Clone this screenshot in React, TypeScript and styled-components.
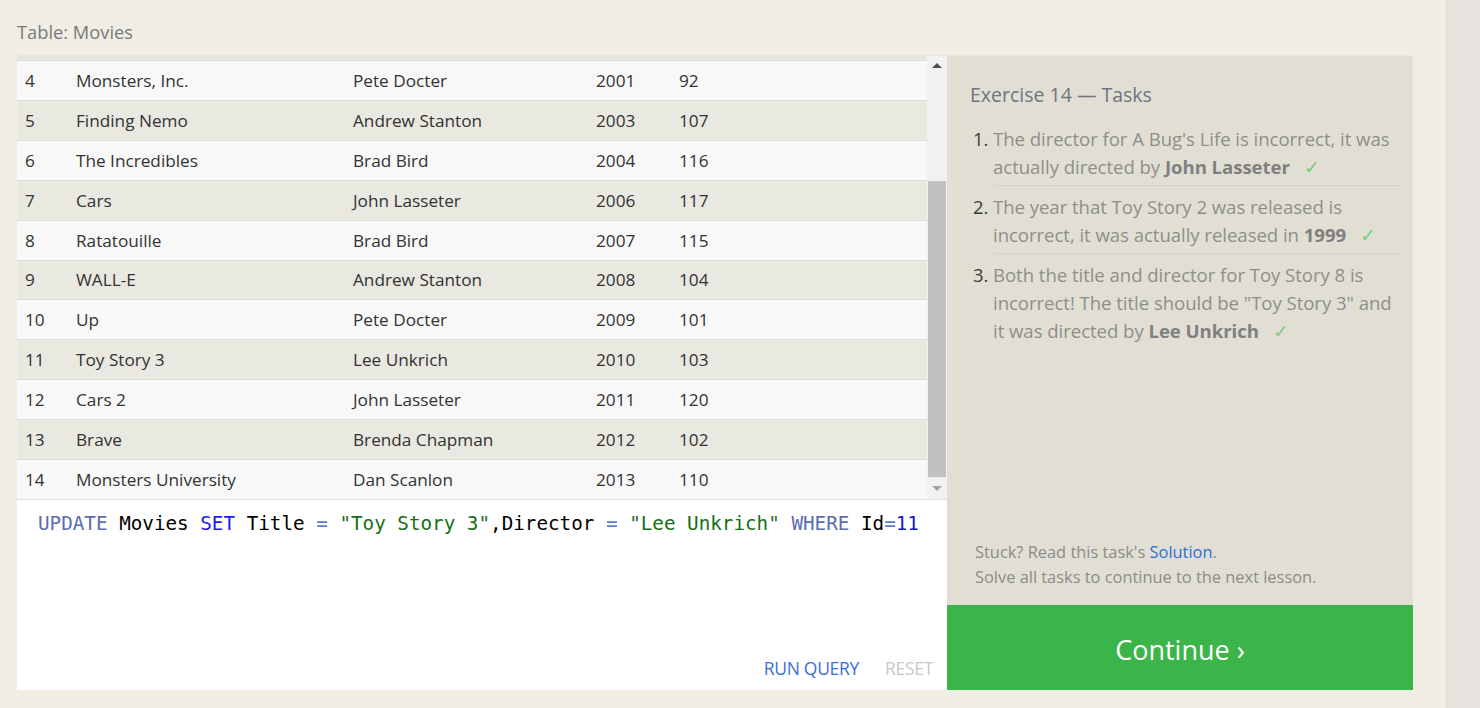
import React from "react";
import styled, { createGlobalStyle } from "styled-components";

const Global = createGlobalStyle`
  html, body { margin: 0; padding: 0; }
  body {
    background: #f0ede5;
    font-family: "Open Sans", "Noto Sans", sans-serif;
    width: 1480px;
    height: 708px;
    overflow: hidden;
  }
`;

const Page = styled.div`
  display: flex;
  width: 1480px;
  height: 708px;
`;

const Main = styled.div`
  width: 1447px;
  padding: 18px 0 0 17px;
  box-sizing: border-box;
  display: flex;
  flex-direction: column;
`;

const WindowTrack = styled.div`
  width: 33px;
  background: #e7e3df;
  border-left: 1px solid #dedad6;
`;

const TableTitle = styled.div`
  font-size: 18.3px;
  color: #7a7a7a;
  line-height: 28px;
  height: 37px;
`;

const Exercise = styled.div`
  display: flex;
  width: 1396px;
  height: 635px;
`;

const LeftCol = styled.div`
  width: 930px;
  display: flex;
  flex-direction: column;
`;

const TableArea = styled.div`
  display: flex;
  height: 444px;
  background: #e8e6df;
`;

const Rows = styled.div`
  flex: 1;
  padding-top: 5px;
  display: flex;
  flex-direction: column;
`;

const Row = styled.div<{ $odd: boolean }>`
  display: grid;
  grid-template-columns: 51px 277px 243px 83px 1fr;
  align-items: center;
  height: 39px;
  border-top: 1px solid #dcdcd8;
  padding-left: 8px;
  background: ${(p) => (p.$odd ? "#f8f8f8" : "#e9e8e1")};
  font-size: 17.2px;
  color: #333;
`;

const Cell = styled.span`
  white-space: nowrap;
`;

const Scrollbar = styled.div`
  width: 20px;
  background: #f1f1f1;
  display: flex;
  flex-direction: column;
  align-items: center;
  margin-top: 1px;
`;

const Arrow = styled.div<{ $up: boolean }>`
  width: 0;
  height: 0;
  border-left: 5px solid transparent;
  border-right: 5px solid transparent;
  ${(p) =>
    p.$up
      ? "border-bottom: 5px solid #505050; margin: 7px 0 0;"
      : "border-top: 5px solid #a3a3a3; margin: 0 0 8px;"}
`;

const Track = styled.div`
  flex: 1;
  width: 100%;
  display: flex;
  flex-direction: column;
  padding: 0 1px;
  box-sizing: border-box;
`;

const Thumb = styled.div`
  margin-top: 113px;
  height: 296px;
  background: #c1c1c1;
`;

const Editor = styled.div`
  height: 191px;
  background: #fff;
  border-top: 1px solid #e2e0d8;
  box-sizing: border-box;
  display: flex;
  flex-direction: column;
  justify-content: space-between;
  padding: 10px 14px 10px 21px;
`;

const Code = styled.pre`
  margin: 0;
  font-family: "DejaVu Sans Mono", "Liberation Mono", monospace;
  font-size: 19.25px;
  line-height: 27px;
  color: #000;
`;

const Tok = styled.span<{ $c: string }>`
  color: ${(p) => p.$c};
`;

const Actions = styled.div`
  display: flex;
  justify-content: flex-end;
  gap: 26px;
`;

const ActionBtn = styled.span<{ $active: boolean }>`
  font-size: 17.5px;
  letter-spacing: -0.3px;
  color: ${(p) => (p.$active ? "#3b6fd6" : "#c8c8c8")};
  line-height: 24px;
`;

const RightCol = styled.div`
  width: 466px;
  display: flex;
  flex-direction: column;
`;

const Tasks = styled.div`
  flex: 1;
  background: #e1dfd4;
  border-top: 1px solid #e7e5dc;
  border-right: 1px solid #e7e5dc;
  display: flex;
  flex-direction: column;
  justify-content: space-between;
  padding: 27px 10px 16px 23px;
`;

const TasksTitle = styled.div`
  font-size: 19.5px;
  color: #6f747e;
  line-height: 24px;
  margin-bottom: 18px;
`;

const List = styled.ol`
  margin: 0;
  padding: 0;
  list-style: none;
`;

const Item = styled.li`
  display: flex;
  padding-left: 3px;
`;

const Num = styled.span`
  width: 20px;
  flex: none;
  font-size: 18.5px;
  line-height: 28px;
  color: #3a3a3a;
`;

const ItemBody = styled.div<{ $last: boolean }>`
  flex: 1;
  font-size: 18.6px;
  letter-spacing: -0.05px;
  line-height: 28px;
  color: #8f8f8a;
  padding: 0 0 4px;
  margin-bottom: 7px;
  border-bottom: ${(p) => (p.$last ? "none" : "1px solid #d6d4c9")};
`;

const Strong = styled.b`
  color: #808080;
  font-weight: 700;
`;

const Check = styled.span`
  display: inline-block;
  color: #7dcb80;
  margin-left: 14px;
  font-family: "DejaVu Sans", sans-serif;
  font-size: 19px;
  font-weight: 300;
  line-height: 1;
`;

const Footer = styled.div`
  padding-left: 5px;
  font-size: 16.4px;
  line-height: 25px;
  color: #8c8c8a;
`;

const Link = styled.a`
  color: #2e6fd6;
  text-decoration: none;
`;

const Continue = styled.button`
  height: 85px;
  border: none;
  background: #3bb54a;
  color: #fff;
  font-family: "Open Sans", "Noto Sans", sans-serif;
  font-size: 27px;
  cursor: pointer;
  padding: 3px 0 0;
`;

const movies: [number, string, string, number, number][] = [
  [4, "Monsters, Inc.", "Pete Docter", 2001, 92],
  [5, "Finding Nemo", "Andrew Stanton", 2003, 107],
  [6, "The Incredibles", "Brad Bird", 2004, 116],
  [7, "Cars", "John Lasseter", 2006, 117],
  [8, "Ratatouille", "Brad Bird", 2007, 115],
  [9, "WALL-E", "Andrew Stanton", 2008, 104],
  [10, "Up", "Pete Docter", 2009, 101],
  [11, "Toy Story 3", "Lee Unkrich", 2010, 103],
  [12, "Cars 2", "John Lasseter", 2011, 120],
  [13, "Brave", "Brenda Chapman", 2012, 102],
  [14, "Monsters University", "Dan Scanlon", 2013, 110],
];

const KW = "#5a6db0";
const SETC = "#1c1cf0";
const OP = "#5e7fc0";
const STR = "#157015";
const NUM = "#1818c8";

export default function App() {
  return (
    <Page>
      <Global />
      <Main>
        <TableTitle>Table: Movies</TableTitle>
        <Exercise>
          <LeftCol>
            <TableArea>
              <Rows>
                {movies.map((m, i) => (
                  <Row key={m[0]} $odd={i % 2 === 0}>
                    {m.map((v, j) => (
                      <Cell key={j}>{v}</Cell>
                    ))}
                  </Row>
                ))}
              </Rows>
              <Scrollbar>
                <Arrow $up />
                <Track>
                  <Thumb />
                </Track>
                <Arrow $up={false} />
              </Scrollbar>
            </TableArea>
            <Editor>
              <Code>
                <Tok $c={KW}>UPDATE</Tok> Movies <Tok $c={SETC}>SET</Tok> Title{" "}
                <Tok $c={OP}>=</Tok> <Tok $c={STR}>"Toy Story 3"</Tok>,Director{" "}
                <Tok $c={OP}>=</Tok> <Tok $c={STR}>"Lee Unkrich"</Tok>{" "}
                <Tok $c={KW}>WHERE</Tok> Id<Tok $c={OP}>=</Tok>
                <Tok $c={NUM}>11</Tok>
              </Code>
              <Actions>
                <ActionBtn $active>RUN QUERY</ActionBtn>
                <ActionBtn $active={false}>RESET</ActionBtn>
              </Actions>
            </Editor>
          </LeftCol>
          <RightCol>
            <Tasks>
              <div>
                <TasksTitle>Exercise 14 — Tasks</TasksTitle>
                <List>
                  <Item>
                    <Num>1.</Num>
                    <ItemBody $last={false}>
                      The director for A Bug's Life is incorrect, it was actually directed by{" "}
                      <Strong>John Lasseter</Strong>
                      <Check>✓</Check>
                    </ItemBody>
                  </Item>
                  <Item>
                    <Num>2.</Num>
                    <ItemBody $last={false}>
                      The year that Toy Story 2 was released is incorrect, it was actually released in{" "}
                      <Strong>1999</Strong>
                      <Check>✓</Check>
                    </ItemBody>
                  </Item>
                  <Item>
                    <Num>3.</Num>
                    <ItemBody $last>
                      Both the title and director for Toy Story 8 is incorrect! The title should be
                      "Toy Story 3" and it was directed by <Strong>Lee Unkrich</Strong>
                      <Check>✓</Check>
                    </ItemBody>
                  </Item>
                </List>
              </div>
              <Footer>
                Stuck? Read this task's <Link href="#">Solution</Link>.
                <br />
                Solve all tasks to continue to the next lesson.
              </Footer>
            </Tasks>
            <Continue>Continue ›</Continue>
          </RightCol>
        </Exercise>
      </Main>
      <WindowTrack />
    </Page>
  );
}
